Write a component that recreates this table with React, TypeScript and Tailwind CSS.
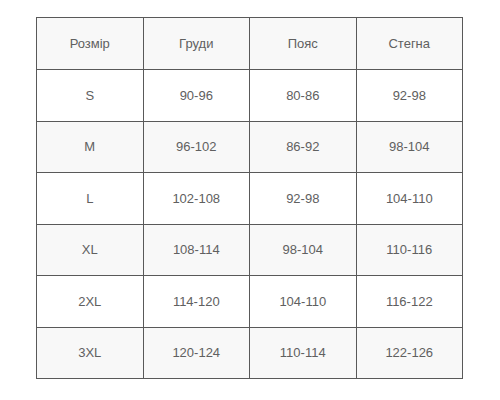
const header = ['Розмір', 'Груди', 'Пояс', 'Стегна']

const rows = [
  ['S', '90-96', '80-86', '92-98'],
  ['M', '96-102', '86-92', '98-104'],
  ['L', '102-108', '92-98', '104-110'],
  ['XL', '108-114', '98-104', '110-116'],
  ['2XL', '114-120', '104-110', '116-122'],
  ['3XL', '120-124', '110-114', '122-126'],
]

export default function App() {
  return (
    <div className="w-[500px] h-[400px] bg-white pt-[17px] pl-[36px] font-['Liberation_Sans',Arial,sans-serif]">
      <table className="w-[427px] border-collapse text-[13px] text-[#606060] text-center table-fixed">
        <thead>
          <tr className="h-[52px] bg-[#f8f8f8]">
            {header.map((h) => (
              <th key={h} className="border border-[#595959] font-normal">
                {h}
              </th>
            ))}
          </tr>
        </thead>
        <tbody>
          {rows.map((r, i) => (
            <tr key={r[0]} className={i % 2 === 1 ? 'h-[51.5px] bg-[#f8f8f8]' : 'h-[51.5px] bg-white'}>
              {r.map((c, j) => (
                <td key={j} className="border border-[#595959]">
                  {c}
                </td>
              ))}
            </tr>
          ))}
        </tbody>
      </table>
    </div>
  )
}
